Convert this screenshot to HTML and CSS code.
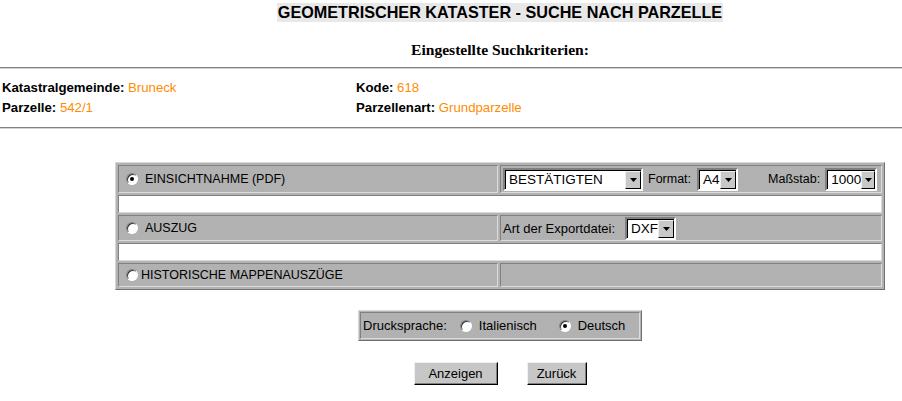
FILE: index.html
```html
<!DOCTYPE html>
<html lang="de">
<head>
<meta charset="utf-8">
<title>Geometrischer Kataster - Suche nach Parzelle</title>
<link rel="stylesheet" href="styles.css">
</head>
<body>
<div class="page">
  <h1 class="title">GEOMETRISCHER KATASTER - SUCHE NACH PARZELLE</h1>
  <h2 class="sub">Eingestellte Suchkriterien:</h2>
  <hr class="rule">
  <div class="info">
    <div class="info-item"><b>Katastralgemeinde:</b> <span class="val">Bruneck</span></div>
    <div class="info-item"><b>Kode:</b> <span class="val">618</span></div>
    <div class="info-item"><b>Parzelle:</b> <span class="val">542/1</span></div>
    <div class="info-item"><b>Parzellenart:</b> <span class="val">Grundparzelle</span></div>
  </div>
  <hr class="rule">

  <div class="opts">
    <div class="cell r1 opt"><span class="radio checked"></span><span class="lbl">EINSICHTNAHME (PDF)</span></div>
    <div class="cell r1 ctl">
      <span class="select w-best"><span class="sv">BESTÄTIGTEN</span><span class="arrow"><svg width="7" height="4" viewBox="0 0 7 4"><path d="M0 0H7L3.5 4Z" fill="#000"/></svg></span></span>
      <span class="t t-format">Format:</span>
      <span class="select w-a4"><span class="sv">A4</span><span class="arrow"><svg width="7" height="4" viewBox="0 0 7 4"><path d="M0 0H7L3.5 4Z" fill="#000"/></svg></span></span>
      <span class="t t-mass">Maßstab:</span>
      <span class="select w-1000"><span class="sv">1000</span><span class="arrow"><svg width="7" height="4" viewBox="0 0 7 4"><path d="M0 0H7L3.5 4Z" fill="#000"/></svg></span></span>
    </div>
    <div class="cell blank"></div>
    <div class="cell r2 opt"><span class="radio"></span><span class="lbl">AUSZUG</span></div>
    <div class="cell r2 ctl">
      <span class="t t-art">Art der Exportdatei:</span>
      <span class="select w-dxf"><span class="sv">DXF</span><span class="arrow"><svg width="7" height="4" viewBox="0 0 7 4"><path d="M0 0H7L3.5 4Z" fill="#000"/></svg></span></span>
    </div>
    <div class="cell blank"></div>
    <div class="cell r3 opt tight"><span class="radio"></span><span class="lbl">HISTORISCHE MAPPENAUSZÜGE</span></div>
    <div class="cell r3"></div>
  </div>

  <div class="lang">
    <div class="lang-in">
      <span class="t">Drucksprache:</span>
      <span class="radio"></span><span class="t">Italienisch</span>
      <span class="radio checked"></span><span class="t">Deutsch</span>
    </div>
  </div>

  <div class="buttons">
    <button class="btn b-show" type="button">Anzeigen</button>
    <button class="btn b-back" type="button">Zurück</button>
  </div>
</div>
</body>
</html>
```
FILE: styles.css
```css
html, body { margin: 0; padding: 0; }
body {
  background: #fff;
  overflow: hidden;
  font-family: "Liberation Sans", Arial, sans-serif;
  color: #000;
}
.page { width: 1000px; padding-top: 3px; }

.title {
  width: fit-content;
  margin: 0 auto;
  padding: 0 1px;
  background: #e8e8e8;
  font: bold 16.2px/19px "Liberation Sans", Arial, sans-serif;
}
.sub {
  margin: 19px 0 0;
  text-align: center;
  font: bold 15.6px/17px "Liberation Serif", "Times New Roman", serif;
}
.rule {
  margin: 0;
  height: 0;
  border: 0;
  border-top: 1px solid #808080;
  border-bottom: 1px solid #d4d4d4;
}
.sub + .rule { margin-top: 9px; }

.info {
  display: grid;
  grid-template-columns: 354px 1fr;
  row-gap: 4px;
  padding: 11px 0 11px 2px;
  font-size: 13.2px;
  line-height: 16px;
}
.info b { font-weight: bold; }
.info .val { color: #ff8c00; }

.opts {
  width: 764px;
  margin: 33px auto 0;
  display: grid;
  grid-template-columns: 380px 1fr;
  gap: 2px;
  padding: 2px;
  border: 1px solid;
  border-color: #d8d8d8 #707070 #707070 #d8d8d8;
  background: #b2b2b2;
}
.cell {
  border: 1px solid;
  border-color: #808080 #dcdcdc #dcdcdc #808080;
  background: #b1b1b1 repeating-conic-gradient(#afafaf 0 25%, #b4b4b4 0 50%) 0 0 / 2px 2px;
  display: flex;
  align-items: center;
  font-size: 12.5px;
}
.r1 { height: 26px; }
.r2 { height: 24px; }
.r3 { height: 22px; }
.blank { grid-column: 1 / 3; height: 16px; background: #fff; }

.opt { padding-left: 7px; }
.opt .lbl { margin-left: 7px; }
.opt.tight .lbl { margin-left: 3px; }
.ctl { padding-left: 2px; }

.radio {
  width: 10px;
  height: 10px;
  border: 1px solid;
  border-color: #808080 #fff #fff #808080;
  border-radius: 50%;
  background: #fff;
  box-shadow: inset 1px 1px 0 #303030;
  position: relative;
  flex: none;
}
.radio.checked::after {
  content: "";
  position: absolute;
  left: 3px;
  top: 3px;
  width: 4px;
  height: 4px;
  border-radius: 50%;
  background: #000;
}

.select {
  display: inline-flex;
  align-items: stretch;
  height: 18px;
  border: 2px solid;
  border-color: #808080 #fff #fff #808080;
  box-shadow: inset 1px 1px 0 #000;
  background: #fff;
  font-size: 13.5px;
  flex: none;
  padding: 1px 0 0 1px;
}
.select .sv { flex: 1; padding-left: 3px; line-height: 17px; }
.select .arrow {
  width: 16px;
  display: flex;
  align-items: center;
  justify-content: center;
  background: #c8c8c8;
  border: 1px solid;
  border-color: #f0f0f0 #000 #000 #f0f0f0;
  box-sizing: border-box;
}
.w-best { width: 135px; }
.w-a4 { width: 36px; }
.w-1000 { width: 47px; }
.w-dxf { width: 46px; }

.t-format { margin: 0 6px 0 5px; }
.t-mass { margin: 0 5px 0 30px; }
.t-art { font-size: 13px; margin-right: 10px; }

.lang {
  width: 282px;
  margin: 20px auto 0;
  border: 1px solid;
  border-color: #d8d8d8 #707070 #707070 #d8d8d8;
  background: #b2b2b2;
}
.lang-in {
  margin: 1px;
  height: 25px;
  border: 1px solid;
  border-color: #808080 #dcdcdc #dcdcdc #808080;
  background: #b1b1b1 repeating-conic-gradient(#afafaf 0 25%, #b4b4b4 0 50%) 0 0 / 2px 2px;
  display: flex;
  align-items: center;
  padding-left: 2px;
  font-size: 13px;
}
.lang-in .radio { margin: 0 7px 0 0; }
.lang-in .t:first-child { margin-right: 13px; }
.lang-in .t:nth-child(3) { margin-right: 22px; }

.buttons {
  display: flex;
  justify-content: center;
  gap: 29px;
  margin-top: 21px;
}
.btn {
  height: 23px;
  padding: 0;
  border: 1px solid;
  border-color: #f0f0f0 #000 #000 #f0f0f0;
  box-shadow: inset -1px -1px 0 #808080;
  background: #c6c6c6 repeating-conic-gradient(#c4c4c4 0 25%, #c9c9c9 0 50%) 0 0 / 2px 2px;
  font: 13px "Liberation Sans", Arial, sans-serif;
  color: #000;
}
.b-show { width: 84px; }
.b-back { width: 60px; }
```
